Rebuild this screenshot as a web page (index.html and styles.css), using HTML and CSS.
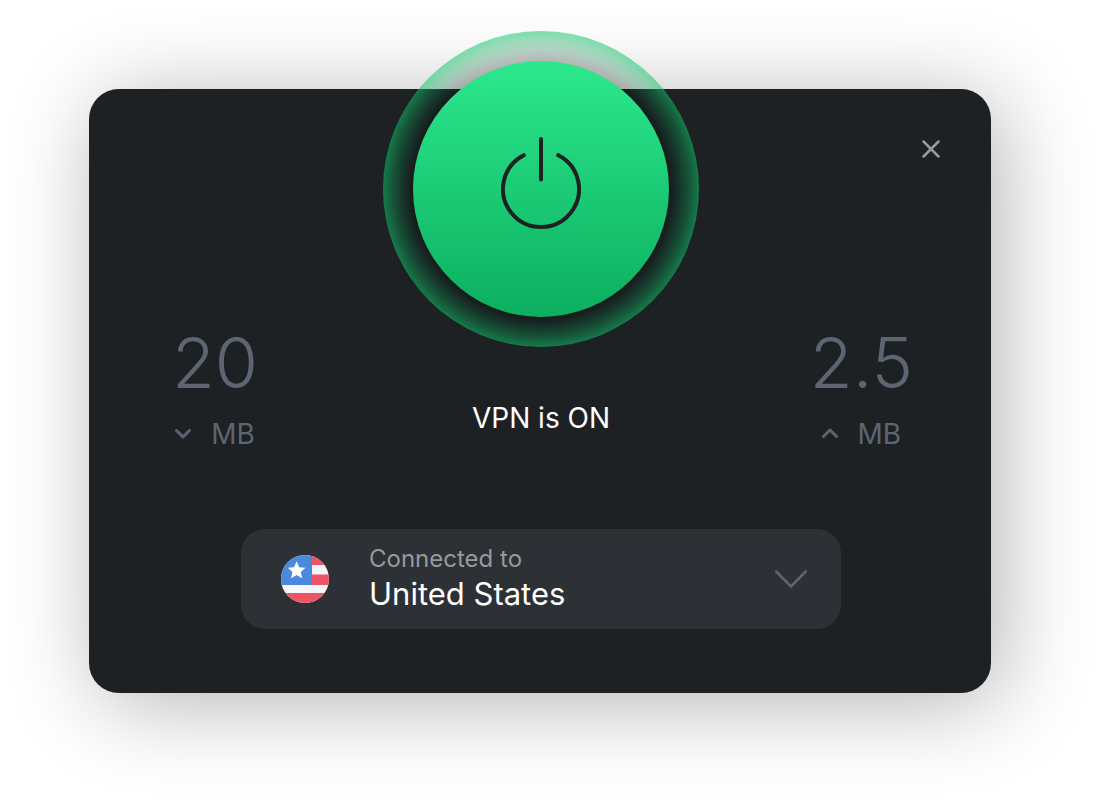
FILE: index.html
```html
<!DOCTYPE html>
<html lang="en">
<head>
  <meta charset="utf-8">
  <meta name="viewport" content="width=device-width, initial-scale=1">
  <title>VPN</title>
  <link rel="stylesheet" href="styles.css">
</head>
<body>
  <main class="card">
    <section class="stat stat-down" aria-label="Downloaded">
      <span class="stat-value">20</span>
      <span class="stat-unit">
        <svg class="arrow" viewBox="0 0 16 12" aria-hidden="true"><path d="M1.5 2.5 8 9l6.5-6.5"/></svg>
        MB
      </span>
    </section>

    <button class="power" type="button" aria-label="Turn VPN off" aria-pressed="true">
      <span class="power-face">
        <svg class="power-icon" viewBox="0 0 80 104" aria-hidden="true">
          <path d="M22.7 18.2a38 38 0 1 0 34.6 0M40 2v40.500"/>
        </svg>
      </span>
    </button>

    <p class="status">VPN is ON</p>

    <button class="close" type="button" aria-label="Close">
      <svg class="close-icon" viewBox="0 0 18 18" aria-hidden="true"><path d="m1.500 1.500 15 15m0-15-15 15"/></svg>
    </button>

    <section class="stat stat-up" aria-label="Uploaded">
      <span class="stat-value">2.5</span>
      <span class="stat-unit">
        <svg class="arrow" viewBox="0 0 16 12" aria-hidden="true"><path d="M1.500 8.500 8 2l6.500 6.500"/></svg>
        MB
      </span>
    </section>

    <div class="location">
      <svg class="flag" viewBox="0 0 48 48" aria-hidden="true">
        <defs><clipPath id="round"><circle cx="24" cy="24" r="24"/></clipPath></defs>
        <g clip-path="url(#round)">
          <path fill="#f5f7fa" d="M0 0h48v48H0z"/>
          <path fill="#ed5564" d="M30 0h18v10H30zM30 19.500h18V30H30zM0 38h48v10H0z"/>
          <path fill="#4a89dc" d="M0 0h31v30H0z"/>
          <path fill="#fff" d="m15.600 6.200 2.600 6 6.200.5-4.600 4.200 1.400 6.300-5.600-3.200-5.500 3.200 1.300-6.300-4.600-4.200 6.200-.5z"/>
        </g>
      </svg>
      <div class="location-text">
        <label class="location-label" for="country">Connected to</label>
        <select class="location-select" id="country">
          <option selected>United States</option>
        </select>
      </div>
      <svg class="chevron" viewBox="0 0 32 20" aria-hidden="true"><path d="m1.200 2.500 14.800 15L30.800 2.500"/></svg>
    </div>
  </main>
</body>
</html>
```
FILE: styles.css
```css
* {
  box-sizing: border-box;
}

body {
  margin: 0;
  min-height: 100vh;
  padding: 89px 109px 109px 89px;
  background: #fff;
  font-family: Inter, "Liberation Sans", sans-serif;
}

button {
  border: 0;
  padding: 0;
  background: none;
  cursor: pointer;
}

svg {
  display: block;
  fill: none;
  stroke-linecap: round;
  stroke-linejoin: round;
}

.card {
  display: grid;
  grid-template-columns: 1fr auto 1fr;
  padding: 0 40px 64px 42px;
  border-radius: 30px;
  background: #1d2124;
  box-shadow: 10px 10px 90px rgba(0, 0, 0, .3);
}

.power {
  grid-area: 1 / 2;
  margin-top: -58px;
  padding: 30px;
  border-radius: 50%;
  background: radial-gradient(closest-side,
    rgba(0, 0, 0, .24) 81%,
    rgba(6, 110, 60, .28) 88%,
    rgba(12, 170, 90, .38) 94%,
    rgba(14, 199, 106, .54) 100%);
}

.power-face {
  display: grid;
  place-items: center;
  width: 256px;
  height: 256px;
  border-radius: 50%;
  background: linear-gradient(#2ce88d, #0caf5f);
}

.power-icon {
  width: 80px;
  height: 104px;
  stroke: #1d2124;
  stroke-width: 4;
}

.status {
  grid-area: 2 / 2;
  margin: 54px 0 94px;
  color: #fff;
  font-size: 28px;
  line-height: 34px;
  text-align: center;
}

.close {
  grid-area: 1 / 3;
  place-self: start end;
  display: grid;
  place-items: center;
  width: 40px;
  height: 40px;
  margin-top: 40px;
}

.close-icon {
  width: 18px;
  height: 18px;
  stroke: #97999b;
  stroke-width: 2.5;
}

.stat {
  grid-row: 1 / 3;
  align-self: end;
  display: flex;
  flex-direction: column;
  align-items: center;
  min-width: 96px;
  margin-bottom: 78px;
  color: #5d6572;
}

.stat-down {
  grid-column: 1;
  justify-self: start;
  margin-left: 36px;
}

.stat-up {
  grid-column: 3;
  justify-self: end;
  margin-right: 38px;
}

.stat-value {
  font-size: 70px;
  font-weight: 300;
  line-height: 84px;
}

.stat-unit {
  display: flex;
  align-items: center;
  gap: 20px;
  margin-top: 12px;
  font-size: 28px;
  line-height: 34px;
}

.arrow {
  width: 16px;
  height: 12px;
  stroke: currentColor;
  stroke-width: 3;
}

.location {
  grid-area: 3 / 1 / 4 / 4;
  justify-self: center;
  display: flex;
  align-items: center;
  width: 100%;
  max-width: 600px;
  padding: 15px 34px 15px 40px;
  border-radius: 24px;
  background: #2d3034;
}

.flag {
  width: 48px;
  height: 48px;
}

.location-text {
  flex: 1;
  display: flex;
  flex-direction: column;
  margin-left: 40px;
}

.location-label {
  color: #97999b;
  font-size: 24px;
  line-height: 30px;
}

.location-select {
  appearance: none;
  border: 0;
  padding: 0;
  background: none;
  color: #fff;
  font-family: inherit;
  font-size: 31px;
  line-height: 40px;
}

.chevron {
  width: 32px;
  height: 20px;
  stroke: #5d6572;
  stroke-width: 2.5;
}
```
